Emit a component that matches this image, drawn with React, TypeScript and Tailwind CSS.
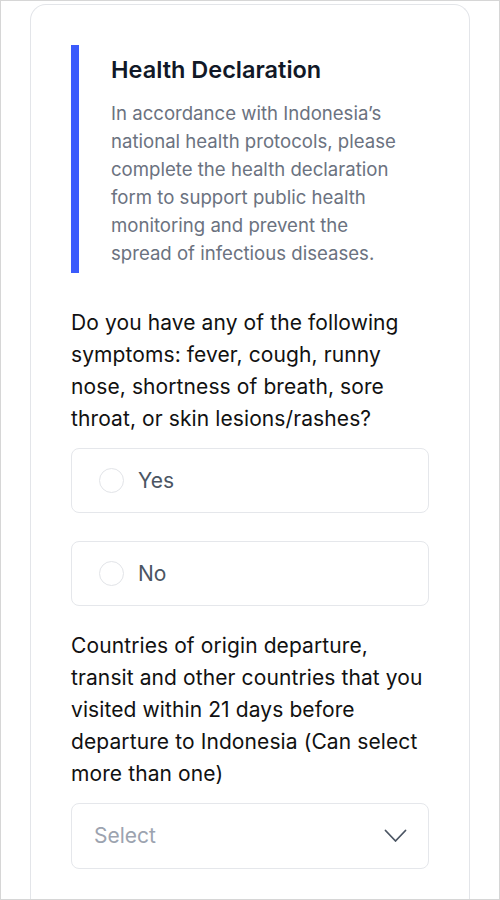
const OPTIONS = ["Yes", "No"];

function RadioOption({ label }: { label: string }) {
  return (
    <label className="flex h-[65px] items-center rounded-lg border border-[#e5e7eb] bg-white pl-[27px]">
      <span className="h-[25px] w-[25px] rounded-full border border-[#e2e4e8] bg-white" />
      <span className="ml-[14px] text-[21px] text-[#4b5563]">{label}</span>
    </label>
  );
}

export default function App() {
  return (
    <div
      className="h-[900px] overflow-hidden border border-[#d6d6d6] bg-white"
      style={{ fontFamily: "Inter, 'Noto Sans', sans-serif" }}
    >
      <div className="ml-[29px] mt-[3px] w-[440px] rounded-t-2xl border border-b-0 border-[#e3e5e9] px-10 pt-10 pb-10">
        {/* intro */}
        <div className="flex">
          <div className="w-2 shrink-0 bg-[#3b5bfc]" />
          <div className="pl-8 pt-[9px] pb-[6px]">
            <h1 className="text-[23.5px] font-semibold leading-8 text-[#111827]">Health Declaration</h1>
            <p className="mt-[13px] w-[292px] text-[18.6px] leading-7 text-[#6b7280]">
              In accordance with Indonesia’s national health protocols, please complete the health declaration form to
              support public health monitoring and prevent the spread of infectious diseases.
            </p>
          </div>
        </div>

        {/* symptoms */}
        <p className="mt-[34px] text-[21px] leading-8 tracking-[0.1px] text-[#111]">
          Do you have any of the following symptoms: fever, cough, runny nose, shortness of breath, sore throat, or
          skin lesions/rashes?
        </p>
        <div className="mt-[13px] flex flex-col gap-7">
          {OPTIONS.map((o) => (
            <RadioOption key={o} label={o} />
          ))}
        </div>

        {/* countries */}
        <p className="mt-6 text-[21px] leading-8 tracking-[0.1px] text-[#111]">
          Countries of origin departure, transit and other countries that you visited within 21 days before departure
          to Indonesia (Can select more than one)
        </p>
        <button className="mt-[13px] flex h-[66px] w-full items-center justify-between rounded-lg border border-[#e5e7eb] bg-white pl-[22px] pr-[21px]">
          <span className="text-[21px] text-[#9ca3af]">Select</span>
          <svg width="23" height="14" viewBox="0 0 23 14" fill="none" className="text-[#4b5563]">
            <polyline
              points="1.5,1.5 11.5,12 21.5,1.5"
              stroke="currentColor"
              strokeWidth="1.8"
              strokeLinecap="round"
              strokeLinejoin="round"
            />
          </svg>
        </button>
      </div>
    </div>
  );
}
